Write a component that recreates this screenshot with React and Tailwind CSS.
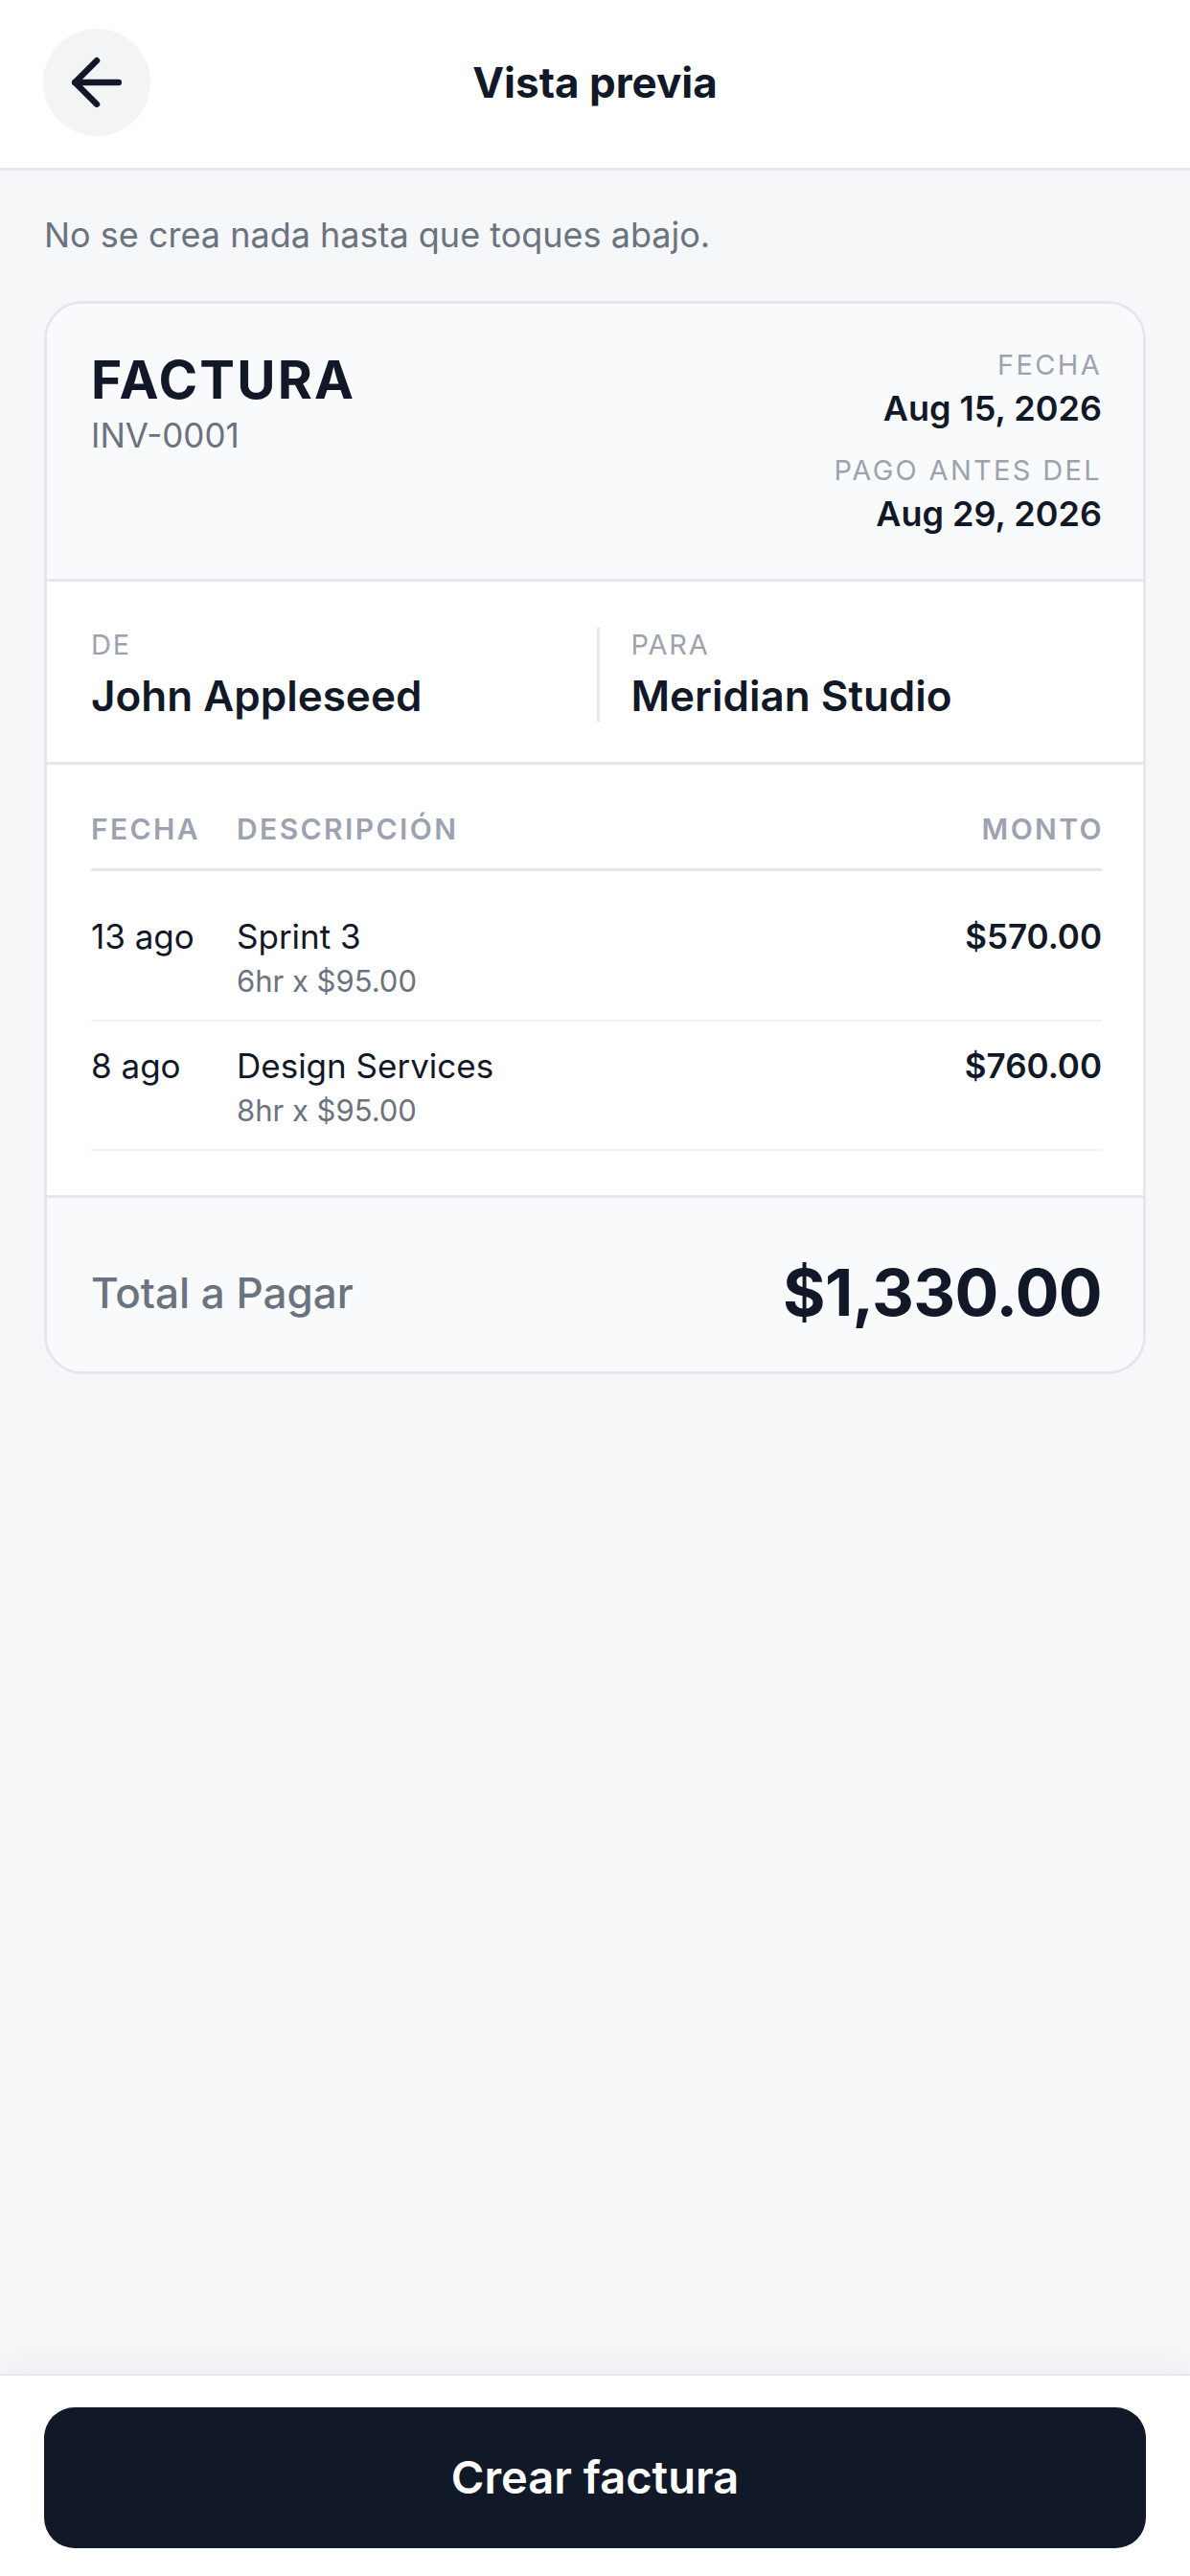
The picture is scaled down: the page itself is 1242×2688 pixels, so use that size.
import React from 'react'
import { ArrowLeft } from 'lucide-react'

const items = [
  { date: '13 ago', title: 'Sprint 3', detail: '6hr x $95.00', amount: '$570.00' },
  { date: '8 ago', title: 'Design Services', detail: '8hr x $95.00', amount: '$760.00' },
]

const ItemRow = ({ item }) => (
  <div className="flex items-start border-b-2 border-[#f1f2f4] pt-[25px] pb-[22px]">
    <div className="w-[152px] shrink-0 text-[35px] leading-[42px] text-[#111827]">{item.date}</div>
    <div className="min-w-0 flex-1">
      <p className="text-[35px] leading-[42px] text-[#111827]">{item.title}</p>
      <p className="mt-[8px] text-[31px] leading-[36px] text-[#6b7280]">{item.detail}</p>
    </div>
    <div className="text-[35px] leading-[42px] font-semibold text-[#111827]">{item.amount}</div>
  </div>
)

export default function App() {
  return (
    <div
      className="flex min-h-screen flex-col bg-[#f6f7f9] text-[#111827]"
      style={{ fontFamily: 'Inter, "Noto Sans", "Liberation Sans", sans-serif' }}
    >
      <header className="flex h-[178px] items-center border-b-[3px] border-[#e5e7eb] bg-white px-[45px] pb-[3px]">
        <button
          type="button"
          className="flex h-[112px] w-[112px] shrink-0 items-center justify-center rounded-full bg-[#f3f4f6] text-[#111827]"
          aria-label="Volver"
        >
          <ArrowLeft size={78} strokeWidth={2} />
        </button>
        <h1 className="flex-1 text-center text-[44px] font-bold leading-[54px]">Vista previa</h1>
        <div className="w-[112px] shrink-0" />
      </header>

      <main className="flex-1 px-[46px] pt-[46px]">
        <p className="text-[36px] leading-[42px] text-[#6b7280]">No se crea nada hasta que toques abajo.</p>

        <div className="mt-[48px] overflow-hidden rounded-[40px] border-[3px] border-[#e5e7eb] bg-white">
          {/* encabezado */}
          <div className="flex items-start justify-between border-b-[3px] border-[#e5e7eb] bg-[#f9fafb] pl-[46px] pr-[43px] pt-[46px] pb-[45px]">
            <div>
              <p className="text-[55px] font-bold leading-[66px] tracking-[0.04em]">FACTURA</p>
              <p className="mt-[4px] text-[35px] leading-[42px] text-[#6b7280]">INV-0001</p>
            </div>
            <div className="text-right">
              <p className="text-[29px] leading-[36px] tracking-[0.08em] text-[#9ca3af]">FECHA</p>
              <p className="mt-[5px] text-[36px] font-semibold leading-[45px]">Aug 15, 2026</p>
              <p className="mt-[24px] text-[29px] leading-[36px] tracking-[0.08em] text-[#9ca3af]">PAGO ANTES DEL</p>
              <p className="mt-[5px] text-[36px] font-semibold leading-[45px]">Aug 29, 2026</p>
            </div>
          </div>

          {/* de / para */}
          <div className="grid grid-cols-2 border-b-[3px] border-[#e5e7eb] pl-[46px] pr-[43px] pt-[48px] pb-[42px]">
            <div>
              <p className="text-[29px] leading-[35px] tracking-[0.06em] text-[#9ca3af]">DE</p>
              <p className="mt-[9px] text-[44px] font-semibold leading-[54px]">John Appleseed</p>
            </div>
            <div className="border-l-[3px] border-[#e5e7eb] pl-[33px]">
              <p className="text-[29px] leading-[35px] tracking-[0.06em] text-[#9ca3af]">PARA</p>
              <p className="mt-[9px] text-[44px] font-semibold leading-[54px]">Meridian Studio</p>
            </div>
          </div>

          {/* conceptos */}
          <div className="pl-[46px] pr-[43px] pt-[48px] pb-[46px]">
            <div className="flex items-center border-b-[3px] border-[#e5e7eb] pb-[22px] text-[30px] font-semibold leading-[38px] tracking-[0.08em] text-[#9ca3af]">
              <span className="w-[152px] shrink-0">FECHA</span>
              <span className="flex-1">DESCRIPCIÓN</span>
              <span className="-mr-[2px]">MONTO</span>
            </div>
            <div className="mt-[22px]">
              {items.map((item) => (
                <ItemRow key={item.title} item={item} />
              ))}
            </div>
          </div>

          {/* total */}
          <div className="flex items-center justify-between border-t-[3px] border-[#e5e7eb] bg-[#f9fafb] pl-[46px] pr-[43px] pt-[56px] pb-[40px]">
            <span className="text-[44px] font-medium leading-[56px] text-[#6b7280]">Total a Pagar</span>
            <span className="text-[68px] font-bold leading-[85px] tracking-[-0.01em]">$1,330.00</span>
          </div>
        </div>
      </main>

      <footer className="border-t-2 border-[#e5e7eb] bg-white px-[46px] pt-[33px] pb-[29px] shadow-[0_-12px_30px_rgba(17,24,39,0.04)]">
        <button
          type="button"
          className="flex h-[147px] w-full items-center justify-center rounded-[32px] bg-[#111827] text-[47px] font-semibold text-white"
        >
          Crear factura
        </button>
      </footer>
    </div>
  )
}
